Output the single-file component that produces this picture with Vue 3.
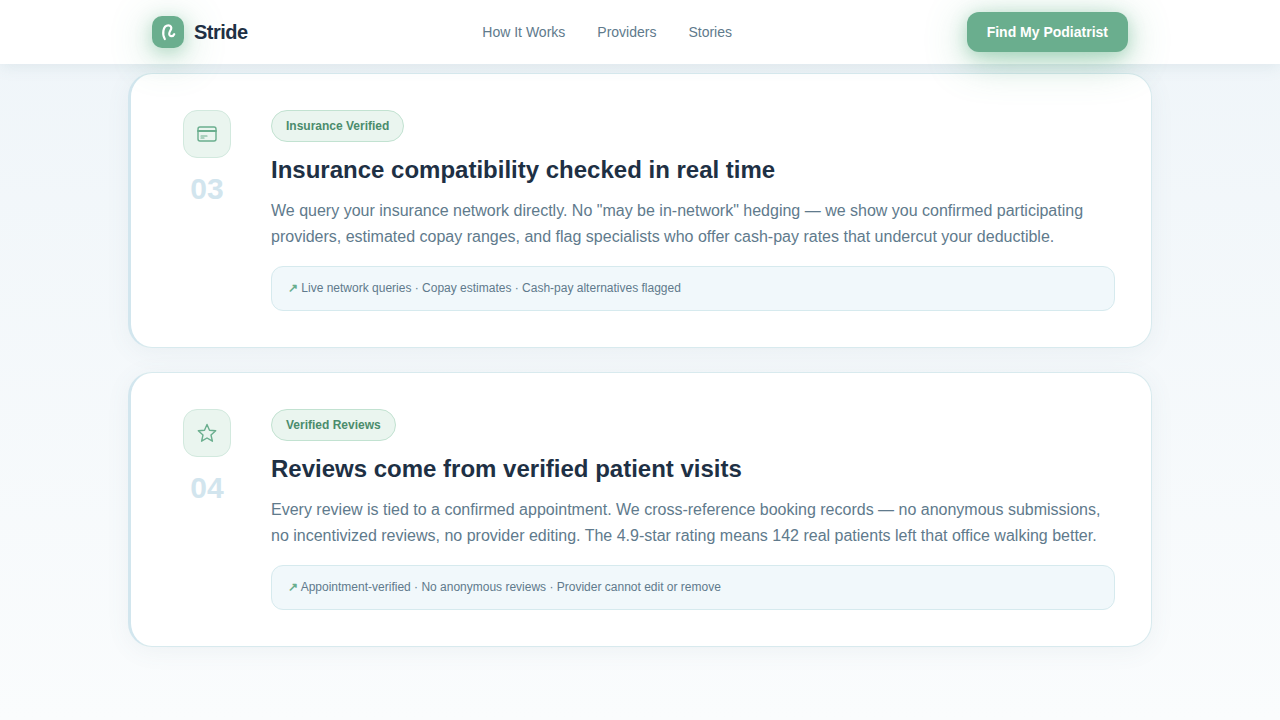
<script setup>
const links = ['How It Works', 'Providers', 'Stories']

const steps = [
  {
    number: '03',
    icon: 'card',
    badge: 'Insurance Verified',
    title: 'Insurance compatibility checked in real time',
    text: 'We query your insurance network directly. No "may be in-network" hedging — we show you confirmed participating providers, estimated copay ranges, and flag specialists who offer cash-pay rates that undercut your deductible.',
    note: 'Live network queries · Copay estimates · Cash-pay alternatives flagged',
  },
  {
    number: '04',
    icon: 'star',
    badge: 'Verified Reviews',
    title: 'Reviews come from verified patient visits',
    text: 'Every review is tied to a confirmed appointment. We cross-reference booking records — no anonymous submissions, no incentivized reviews, no provider editing. The 4.9-star rating means 142 real patients left that office walking better.',
    note: 'Appointment-verified · No anonymous reviews · Provider cannot edit or remove',
  },
]
</script>

<template>
  <div class="page">
    <header class="header">
      <div class="bar">
        <a class="brand" href="#">
          <span class="logo">
            <svg width="20" height="20" viewBox="0 0 20 20" fill="none" stroke="#fff" stroke-width="2.2" stroke-linecap="round" stroke-linejoin="round" aria-hidden="true">
              <path d="M6.8 17C5.4 14.8 4.9 11.8 5.4 8.8C6 5.4 7.8 3.4 10.4 3.4C12.8 3.4 13.8 5.2 13.1 7.2C12.5 8.8 11 10 11.2 12C11.5 14.8 15 15 16.2 12.2" />
            </svg>
          </span>
          Stride
        </a>
        <nav class="links">
          <a v-for="link in links" :key="link" href="#">{{ link }}</a>
        </nav>
        <button class="cta" type="button">Find My Podiatrist</button>
      </div>
    </header>

    <main class="steps">
      <article v-for="step in steps" :key="step.number" class="step">
        <div class="side">
          <div class="icon">
            <svg v-if="step.icon === 'card'" width="22" height="22" viewBox="0 0 22 22" fill="none" stroke="#6aae8e" stroke-linecap="round" aria-hidden="true">
              <rect x="2" y="4" width="18" height="14" rx="2" stroke-width="1.4" />
              <path d="M2 8h18" stroke-width="1.8" />
              <path d="M5 13h6M5 15h3" stroke-width="1.2" />
            </svg>
            <svg v-else width="22" height="22" viewBox="0 0 22 22" fill="none" stroke="#6aae8e" stroke-width="1.4" stroke-linejoin="round" aria-hidden="true">
              <path d="M11 2.5L13.5 8.3L19.7 8.8L15 13L16.4 19.2L11 16L5.6 19.2L7 13L2.3 8.8L8.5 8.3Z" />
            </svg>
          </div>
          <span class="number">{{ step.number }}</span>
        </div>
        <div class="body">
          <span class="badge">{{ step.badge }}</span>
          <h2>{{ step.title }}</h2>
          <p class="text">{{ step.text }}</p>
          <p class="note"><span class="arrow">↗</span> {{ step.note }}</p>
        </div>
      </article>
    </main>
  </div>
</template>

<style>
body {
  margin: 0;
}
</style>

<style scoped>
.page {
  min-height: 100vh;
  box-sizing: border-box;
  background: linear-gradient(180deg, #eff5f9 0%, #fafcfd 100%);
  font-family: "Liberation Sans", Arial, sans-serif;
  color: #1e3044;
}

.header {
  position: sticky;
  top: 0;
  z-index: 10;
  background: #fff;
  box-shadow: 0 2px 16px rgba(80, 120, 130, 0.12);
}

.bar {
  display: flex;
  align-items: center;
  justify-content: space-between;
  box-sizing: border-box;
  max-width: 1024px;
  height: 64px;
  margin: 0 auto;
  padding: 0 24px;
}

.brand {
  display: flex;
  align-items: center;
  gap: 10px;
  color: #1e3044;
  font-size: 20px;
  font-weight: 700;
  letter-spacing: -0.5px;
  text-decoration: none;
}

.logo {
  display: flex;
  align-items: center;
  justify-content: center;
  width: 32px;
  height: 32px;
  border-radius: 10px;
  background: #6aae8e;
  box-shadow: 0 4px 16px rgba(90, 175, 130, 0.35), 0 8px 40px rgba(90, 175, 130, 0.45);
}

.links {
  display: flex;
  gap: 32px;
}

.links a {
  color: #607a8c;
  font-size: 14px;
  text-decoration: none;
}

.cta {
  height: 40px;
  padding: 0 20px;
  border: 0;
  border-radius: 12px;
  background: #6aae8e;
  box-shadow: 0 4px 16px rgba(90, 175, 130, 0.35), 0 8px 40px rgba(90, 175, 130, 0.45);
  color: #fff;
  font-family: inherit;
  font-size: 14px;
  font-weight: 700;
}

.steps {
  display: flex;
  flex-direction: column;
  gap: 24px;
  max-width: 1024px;
  margin: 0 auto;
  padding: 9px 0 72px;
}

.step {
  display: flex;
  gap: 24px;
  padding: 36px;
  border: 1px solid #d8eaee;
  border-left: 3px solid #d2e6ee;
  border-radius: 24px;
  background: #fff;
  box-shadow: 0 4px 24px rgba(80, 120, 130, 0.07);
}

.side {
  display: flex;
  flex: none;
  flex-direction: column;
  align-items: center;
  gap: 16px;
  width: 80px;
}

.icon {
  display: flex;
  align-items: center;
  justify-content: center;
  box-sizing: border-box;
  width: 48px;
  height: 48px;
  border: 1px solid #d2e9de;
  border-radius: 14px;
  background: #eaf5ef;
}

.number {
  color: #d2e5ee;
  font-size: 30px;
  font-weight: 700;
  line-height: 30px;
}

.body {
  flex: 1;
  min-width: 0;
}

.badge {
  display: block;
  box-sizing: border-box;
  width: fit-content;
  padding: 0 14px;
  border: 1px solid #c2e2d1;
  border-radius: 16px;
  background: #eaf5ef;
  color: #4a8c6c;
  font-size: 12px;
  font-weight: 700;
  line-height: 30px;
}

h2 {
  margin: 12px 0;
  font-size: 24px;
  font-weight: 700;
  line-height: 32px;
}

.text {
  margin: 0 0 16px;
  color: #607a8c;
  font-size: 16px;
  line-height: 26px;
}

.note {
  margin: 0;
  padding: 12px 16px;
  border: 1px solid #d6eaee;
  border-radius: 12px;
  background: #f1f8fb;
  color: #607a8c;
  font-size: 12px;
  line-height: 19px;
}

.arrow {
  color: #6aae8e;
  font-weight: 700;
}
</style>
